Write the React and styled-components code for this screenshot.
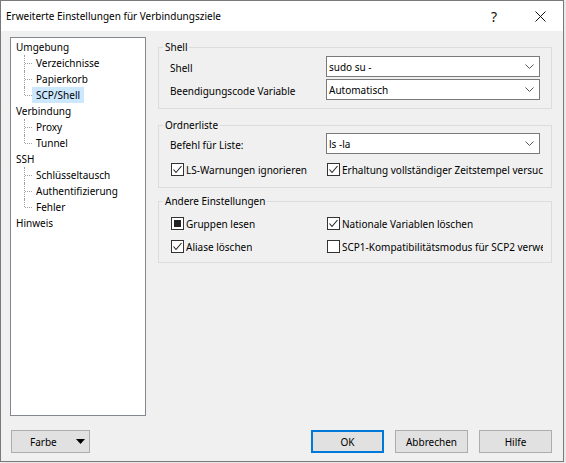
import React from 'react';
import styled, { createGlobalStyle } from 'styled-components';

const GlobalStyle = createGlobalStyle`
  html, body {
    margin: 0;
    padding: 0;
    background: #e9e9e9;
  }
  body {
    font-family: "Noto Sans", "Open Sans", sans-serif;
    font-size: 10px;
    color: #000;
  }
  * {
    box-sizing: border-box;
  }
`;

const tree = [
    { label: 'Umgebung', children: ['Verzeichnisse', 'Papierkorb', 'SCP/Shell'] },
    { label: 'Verbindung', children: ['Proxy', 'Tunnel'] },
    { label: 'SSH', children: ['Schlüsseltausch', 'Authentifizierung', 'Fehler'] },
    { label: 'Hinweis', children: [] },
];

const Chevron = () => (
    <svg width="9" height="5" viewBox="0 0 9 5">
        <polyline points="0.5,0.5 4.5,4.5 8.5,0.5" fill="none" stroke="#555" strokeWidth="1" />
    </svg>
);

const Check = () => (
    <svg width="11" height="11" viewBox="0 0 11 11">
        <polyline points="1.5,5.5 4,8.5 9.5,2" fill="none" stroke="#222" strokeWidth="1.1" />
    </svg>
);

const CheckBox = ({ state, children }) => (
    <CheckItem>
        <Box>
            {state === 'checked' && <Check />}
            {state === 'mixed' && <Mixed />}
        </Box>
        <CheckText>{children}</CheckText>
    </CheckItem>
);

const Select = ({ value }) => (
    <Combo>
        <ComboText>{value}</ComboText>
        <Chevron />
    </Combo>
);

const App = () => (
    <>
        <GlobalStyle />
        <Window>
            <TitleBar>
                <Title>Erweiterte Einstellungen für Verbindungsziele</Title>
                <TitleButton>?</TitleButton>
                <TitleButton>
                    <svg width="11" height="11" viewBox="0 0 11 11">
                        <path d="M0.5 0.5 L10.5 10.5 M10.5 0.5 L0.5 10.5" stroke="#111" strokeWidth="1" />
                    </svg>
                </TitleButton>
            </TitleBar>
            <Main>
                <Tree>
                    {tree.map(node => (
                        <React.Fragment key={node.label}>
                            <Node>{node.label}</Node>
                            {node.children.map((child, i) => (
                                <Leaf key={child} last={i === node.children.length - 1}>
                                    <LeafLabel selected={child === 'SCP/Shell'}>{child}</LeafLabel>
                                </Leaf>
                            ))}
                        </React.Fragment>
                    ))}
                </Tree>
                <Pane>
                    <Group>
                        <Legend>Shell</Legend>
                        <GroupBody top={3} bottom={8}>
                            <FieldRow>
                                <Label>Shell</Label>
                                <Select value="sudo su -" />
                            </FieldRow>
                            <FieldRow gap={2}>
                                <Label>Beendigungscode Variable</Label>
                                <Select value="Automatisch" />
                            </FieldRow>
                        </GroupBody>
                    </Group>
                    <Group mt={10}>
                        <Legend>Ordnerliste</Legend>
                        <GroupBody top={2} bottom={6}>
                            <FieldRow>
                                <Label>Befehl für Liste:</Label>
                                <Select value="ls -la" />
                            </FieldRow>
                            <CheckRow gap={4}>
                                <CheckBox state="checked">LS-Warnungen ignorieren</CheckBox>
                                <CheckBox state="checked">Erhaltung vollständiger Zeitstempel versuchen</CheckBox>
                            </CheckRow>
                        </GroupBody>
                    </Group>
                    <Group mt={7}>
                        <Legend>Andere Einstellungen</Legend>
                        <GroupBody top={5} bottom={4}>
                            <CheckRow>
                                <CheckBox state="mixed">Gruppen lesen</CheckBox>
                                <CheckBox state="checked">Nationale Variablen löschen</CheckBox>
                            </CheckRow>
                            <CheckRow>
                                <CheckBox state="checked">Aliase löschen</CheckBox>
                                <CheckBox>SCP1-Kompatibilitätsmodus für SCP2 verwenden</CheckBox>
                            </CheckRow>
                        </GroupBody>
                    </Group>
                </Pane>
            </Main>
            <Footer>
                <MenuButton>
                    <span>Farbe</span>
                    <svg width="9" height="5" viewBox="0 0 9 5">
                        <polygon points="0,0 9,0 4.5,5" fill="#000" />
                    </svg>
                </MenuButton>
                <Spacer />
                <Button primary>OK</Button>
                <Button>Abbrechen</Button>
                <Button>Hilfe</Button>
            </Footer>
        </Window>
    </>
);

export default App;

const Window = styled.div`
    width: 564px;
    height: 462px;
    border: 1px solid #7a7a7a;
    background: #f0f0f0;
    display: flex;
    flex-direction: column;
`;

const TitleBar = styled.div`
    height: 30px;
    flex-shrink: 0;
    background: #fff;
    display: flex;
    align-items: center;
`;

const Title = styled.div`
    flex: 1;
    padding-left: 5px;
    line-height: 30px;
    white-space: nowrap;
`;

const TitleButton = styled.div`
    width: 46px;
    height: 30px;
    display: flex;
    align-items: center;
    justify-content: center;
    font-size: 14px;
    color: #111;
`;

const Main = styled.div`
    display: flex;
    align-items: flex-start;
    padding: 6px 0 0 9px;
`;

const Tree = styled.div`
    width: 136px;
    height: 379px;
    flex-shrink: 0;
    background: #fff;
    border: 1px solid #828790;
    padding-top: 1px;
`;

const Node = styled.div`
    height: 16px;
    line-height: 16px;
    padding-left: 5px;
    white-space: nowrap;
`;

const Leaf = styled.div`
    position: relative;
    height: 16px;
    padding-left: 21px;
    white-space: nowrap;

    &::before {
        content: '';
        position: absolute;
        left: 13px;
        top: 0;
        height: ${props => props.last ? '8px' : '16px'};
        border-left: 1px dotted #a0a0a0;
    }

    &::after {
        content: '';
        position: absolute;
        left: 14px;
        top: 8px;
        width: 7px;
        border-top: 1px dotted #a0a0a0;
    }
`;

const LeafLabel = styled.span`
    display: inline-block;
    height: 16px;
    line-height: 16px;
    padding: 0 4px 0 4px;
    background: ${props => props.selected ? '#cce8ff' : 'transparent'};
`;

const Pane = styled.div`
    width: 394px;
    margin: 4px 0 0 12px;
`;

const Group = styled.fieldset`
    margin: ${props => props.mt || 0}px 0 0;
    padding: 0;
    min-width: 0;
    border: 1px solid #dcdcdc;
`;

const Legend = styled.legend`
    margin-left: 4px;
    padding: 0 2px;
    line-height: 12px;
`;

const GroupBody = styled.div`
    padding: ${props => props.top}px 11px ${props => props.bottom}px;
`;

const FieldRow = styled.div`
    display: grid;
    grid-template-columns: 156px 1fr;
    align-items: center;
    height: 21px;
    margin-top: ${props => props.gap || 0}px;
`;

const Label = styled.div`
    white-space: nowrap;
    padding-top: 2px;
`;

const Combo = styled.div`
    height: 21px;
    background: #fff;
    border: 1px solid #7a7a7a;
    display: flex;
    align-items: center;
    padding: 0 5px 0 2px;
`;

const ComboText = styled.span`
    flex: 1;
    white-space: nowrap;
`;

const CheckRow = styled.div`
    display: grid;
    grid-template-columns: 156px 217px;
    align-items: center;
    height: 23px;
    margin-top: ${props => props.gap || 0}px;
    margin-right: -4px;
`;

const CheckItem = styled.div`
    display: flex;
    align-items: center;
    overflow: hidden;
    white-space: nowrap;
    padding-left: 1px;
`;

const Box = styled.span`
    width: 13px;
    height: 13px;
    flex-shrink: 0;
    border: 1px solid #333;
    background: #fff;
    display: flex;
    align-items: center;
    justify-content: center;
    margin-right: 2px;
`;

const Mixed = styled.span`
    width: 7px;
    height: 7px;
    background: #222;
`;

const CheckText = styled.span`
    overflow: hidden;
`;

const Footer = styled.div`
    display: flex;
    align-items: center;
    margin-top: 14px;
    padding: 0 11px 0 10px;
`;

const Spacer = styled.div`
    flex: 1;
`;

const Button = styled.button`
    width: 73px;
    height: 23px;
    margin-left: 11px;
    padding: 0;
    font: inherit;
    color: #000;
    background: #e1e1e1;
    border: ${props => props.primary ? '2px solid #0078d7' : '1px solid #adadad'};
`;

const MenuButton = styled(Button)`
    width: 79px;
    margin-left: 0;
    display: flex;
    align-items: center;
    justify-content: space-between;
    padding: 0 4px 0 18px;
`;
